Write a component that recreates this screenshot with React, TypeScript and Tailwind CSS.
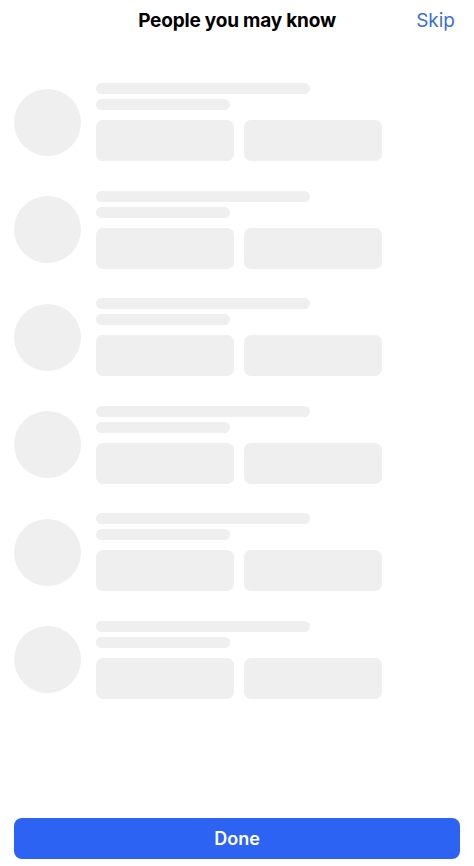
export default function App() {
  const rows = [0, 1, 2, 3, 4, 5];

  return (
    <div
      className="flex h-screen w-full flex-col bg-white"
      style={{ fontFamily: "Inter, 'Noto Sans', sans-serif" }}
    >
      {/* Header */}
      <div className="relative flex h-[42px] items-center justify-center">
        <h1 className="text-[19px] font-bold tracking-[-0.2px] text-black">People you may know</h1>
        <button className="absolute right-[19px] top-1/2 -translate-y-1/2 text-[19px] text-[#3b6fce]">
          Skip
        </button>
      </div>

      {/* Skeleton list */}
      <div className="flex flex-col gap-[29.5px] px-[14px] pt-[41px]">
        {rows.map((i) => (
          <div key={i} className="flex items-center gap-[15px]">
            <div className="h-[67px] w-[67px] shrink-0 rounded-full bg-[#efefef]" />
            <div className="flex flex-col">
              <div className="h-[11px] w-[214px] rounded-full bg-[#efefef]" />
              <div className="mt-[5px] h-[11px] w-[134px] rounded-full bg-[#efefef]" />
              <div className="mt-[10px] flex gap-[10px]">
                <div className="h-[41px] w-[138px] rounded-[7px] bg-[#efefef]" />
                <div className="h-[41px] w-[138px] rounded-[7px] bg-[#efefef]" />
              </div>
            </div>
          </div>
        ))}
      </div>

      {/* Done */}
      <div className="mt-auto px-[14px] pb-[7px]">
        <button className="flex h-[41px] w-full items-center justify-center rounded-[8px] bg-[#2d63f3] text-[18px] font-semibold text-white">
          Done
        </button>
      </div>
    </div>
  );
}
